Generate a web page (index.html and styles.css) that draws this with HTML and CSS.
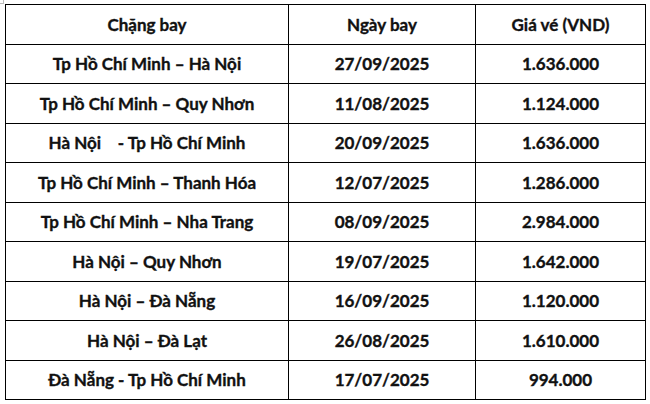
FILE: index.html
```html
<!DOCTYPE html>
<html lang="vi">
<head>
<meta charset="utf-8">
<link rel="stylesheet" href="styles.css">
</head>
<body>
<div class="wrap">
<table class="fares">
  <colgroup>
    <col class="c-route">
    <col class="c-date">
    <col class="c-price">
  </colgroup>
  <thead>
    <tr><th>Chặng bay</th><th>Ngày bay</th><th>Giá vé (VND)</th></tr>
  </thead>
  <tbody>
    <tr><td>Tp Hồ Chí Minh – Hà Nội</td><td>27/09/2025</td><td>1.636.000</td></tr>
    <tr><td>Tp Hồ Chí Minh – Quy Nhơn</td><td>11/08/2025</td><td>1.124.000</td></tr>
    <tr><td>Hà Nội&nbsp;&nbsp;&nbsp;&nbsp;- Tp Hồ Chí Minh</td><td>20/09/2025</td><td>1.636.000</td></tr>
    <tr><td>Tp Hồ Chí Minh – Thanh Hóa</td><td>12/07/2025</td><td>1.286.000</td></tr>
    <tr><td>Tp Hồ Chí Minh – Nha Trang</td><td>08/09/2025</td><td>2.984.000</td></tr>
    <tr><td>Hà Nội – Quy Nhơn</td><td>19/07/2025</td><td>1.642.000</td></tr>
    <tr><td>Hà Nội – Đà Nẵng</td><td>16/09/2025</td><td>1.120.000</td></tr>
    <tr><td>Hà Nội – Đà Lạt</td><td>26/08/2025</td><td>1.610.000</td></tr>
    <tr><td>Đà Nẵng - Tp Hồ Chí Minh</td><td>17/07/2025</td><td>994.000</td></tr>
  </tbody>
</table>
<span class="handle-tl"></span>
<span class="handle-br"></span>
</div>
</body>
</html>
```
FILE: styles.css
```css
html, body {
  margin: 0;
  padding: 0;
  background: #ffffff;
}
body {
  padding: 4px 0 0 5px;
}
.wrap {
  position: relative;
  width: 640px;
}
.fares {
  border-collapse: collapse;
  table-layout: fixed;
  width: 640px;
  font-family: Lato, "Liberation Sans", sans-serif;
  font-weight: 700;
  font-size: 17px;
  color: #111;
  -webkit-text-stroke: 0.35px #111;
}
.c-route { width: 283px; }
.c-date { width: 187px; }
.c-price { width: 170px; }
.fares th,
.fares td {
  border: 1.5px solid #000;
  height: 38.5px;
  padding: 0;
  text-align: center;
  vertical-align: middle;
  font-weight: 700;
  white-space: pre;
}
.handle-tl {
  position: absolute;
  left: -5px;
  top: -4px;
  width: 3px;
  height: 3px;
  border-right: 1px solid #bbb;
  border-bottom: 1px solid #bbb;
}
.handle-br {
  position: absolute;
  right: -5px;
  bottom: -6px;
  width: 4px;
  height: 5px;
  border: 1px solid #999;
  border-bottom: none;
}
```
